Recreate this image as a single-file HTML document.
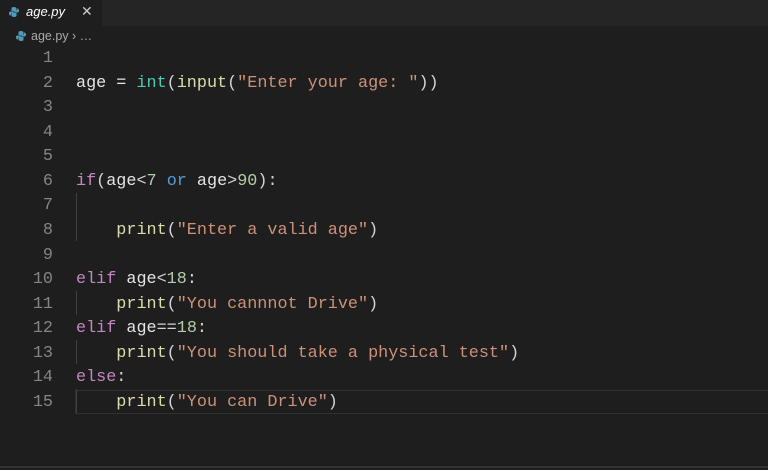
<!DOCTYPE html>
<html><head><meta charset="utf-8"><style>
body{margin:0;width:768px;height:470px;background:#1e1e1e;overflow:hidden;position:relative;font-family:"Liberation Sans",sans-serif}
.tabbar{position:absolute;left:0;top:0;width:768px;height:26px;background:#252526}
.tab{position:absolute;left:0;top:0;width:102px;height:26px;background:#1e1e1e;color:#fff;font-size:13px;font-style:italic}
.tab .n{position:absolute;left:26px;top:4px}
.tab .x{position:absolute;left:81px;top:3px;font-style:normal;font-size:14px;color:#ccc}
.ic{position:absolute;width:10px;height:10px}
.bc{position:absolute;left:31px;top:29px;color:#a9a9a9;font-size:12.5px}
.code{position:absolute;left:0;top:47px;font-family:"Liberation Mono",monospace;font-size:16.8px;width:768px}
.l{height:24.57px;line-height:24.57px;white-space:pre;position:relative;color:#d4d4d4}
.ln{position:absolute;left:0;width:53px;text-align:right;color:#858585}
.t{position:absolute;left:76px}
.k{color:#c586c0}.f{color:#dcdcaa}.s{color:#ce9178}.n2{color:#b5cea8}.b{color:#4ec9b0}.o{color:#569cd6}.v{color:#e4e4e4}
.g{position:absolute;left:76px;width:1px;background:#404040}
.cur{position:absolute;left:75px;top:390px;width:693px;height:22px;border:1px solid #303030;border-right:none}
.bot{position:absolute;left:0;top:466px;width:768px;height:2px;background:#333}
</style></head><body>
<div class="tabbar"><div class="tab">
<svg class="ic" style="left:9px;top:7px" viewBox="0 0 10 10"><path d="M5 0C2 0 2.5 1.5 2.5 2.5V4H5.5V4.5H1.5C0 4.5 0 6 0 6.5C0 8 1 8.5 2 8.5V7C2 6 3 5.5 4 5.5H6.5C7.5 5.5 7.5 4.5 7.5 4V1.5C7.5 0.5 6 0 5 0Z" fill="#519aba"/><path d="M5 10C8 10 7.5 8.5 7.5 7.5V6H4.5V5.5H8.5C10 5.5 10 4 10 3.5C10 2 9 1.5 8 1.5V3C8 4 7 4.5 6 4.5H3.5C2.5 4.5 2.5 5.5 2.5 6V8.5C2.5 9.5 4 10 5 10Z" fill="#519aba"/></svg>
<span class="n">age.py</span><span class="x">✕</span></div></div>
<svg class="ic" style="left:16px;top:31px" viewBox="0 0 10 10"><path d="M5 0C2 0 2.5 1.5 2.5 2.5V4H5.5V4.5H1.5C0 4.5 0 6 0 6.5C0 8 1 8.5 2 8.5V7C2 6 3 5.5 4 5.5H6.5C7.5 5.5 7.5 4.5 7.5 4V1.5C7.5 0.5 6 0 5 0Z" fill="#519aba"/><path d="M5 10C8 10 7.5 8.5 7.5 7.5V6H4.5V5.5H8.5C10 5.5 10 4 10 3.5C10 2 9 1.5 8 1.5V3C8 4 7 4.5 6 4.5H3.5C2.5 4.5 2.5 5.5 2.5 6V8.5C2.5 9.5 4 10 5 10Z" fill="#519aba"/></svg>
<div class="bc">age.py › …</div>
<div class="cur"></div>
<div class="g" style="top:193px;height:48px"></div>
<div class="g" style="top:291px;height:24px"></div>
<div class="g" style="top:340px;height:24px"></div>
<div class="g" style="top:389px;height:24px"></div>
<div class="code">
<div class="l"><span class="ln">1</span></div>
<div class="l"><span class="ln">2</span><span class="t"><span class="v">age = </span><span class="b">int</span>(<span class="f">input</span>(<span class="s">"Enter your age: "</span>))</span></div>
<div class="l"><span class="ln">3</span></div>
<div class="l"><span class="ln">4</span></div>
<div class="l"><span class="ln">5</span></div>
<div class="l"><span class="ln">6</span><span class="t"><span class="k">if</span>(<span class="v">age</span>&lt;<span class="n2">7</span> <span class="o">or</span> <span class="v">age</span>&gt;<span class="n2">90</span>):</span></div>
<div class="l"><span class="ln">7</span></div>
<div class="l"><span class="ln">8</span><span class="t">    <span class="f">print</span>(<span class="s">"Enter a valid age"</span>)</span></div>
<div class="l"><span class="ln">9</span></div>
<div class="l"><span class="ln">10</span><span class="t"><span class="k">elif</span> <span class="v">age</span>&lt;<span class="n2">18</span>:</span></div>
<div class="l"><span class="ln">11</span><span class="t">    <span class="f">print</span>(<span class="s">"You cannnot Drive"</span>)</span></div>
<div class="l"><span class="ln">12</span><span class="t"><span class="k">elif</span> <span class="v">age</span>==<span class="n2">18</span>:</span></div>
<div class="l"><span class="ln">13</span><span class="t">    <span class="f">print</span>(<span class="s">"You should take a physical test"</span>)</span></div>
<div class="l"><span class="ln">14</span><span class="t"><span class="k">else</span>:</span></div>
<div class="l"><span class="ln">15</span><span class="t">    <span class="f">print</span>(<span class="s">"You can Drive"</span>)</span></div>
</div>
<div class="bot"></div>
</body></html>
